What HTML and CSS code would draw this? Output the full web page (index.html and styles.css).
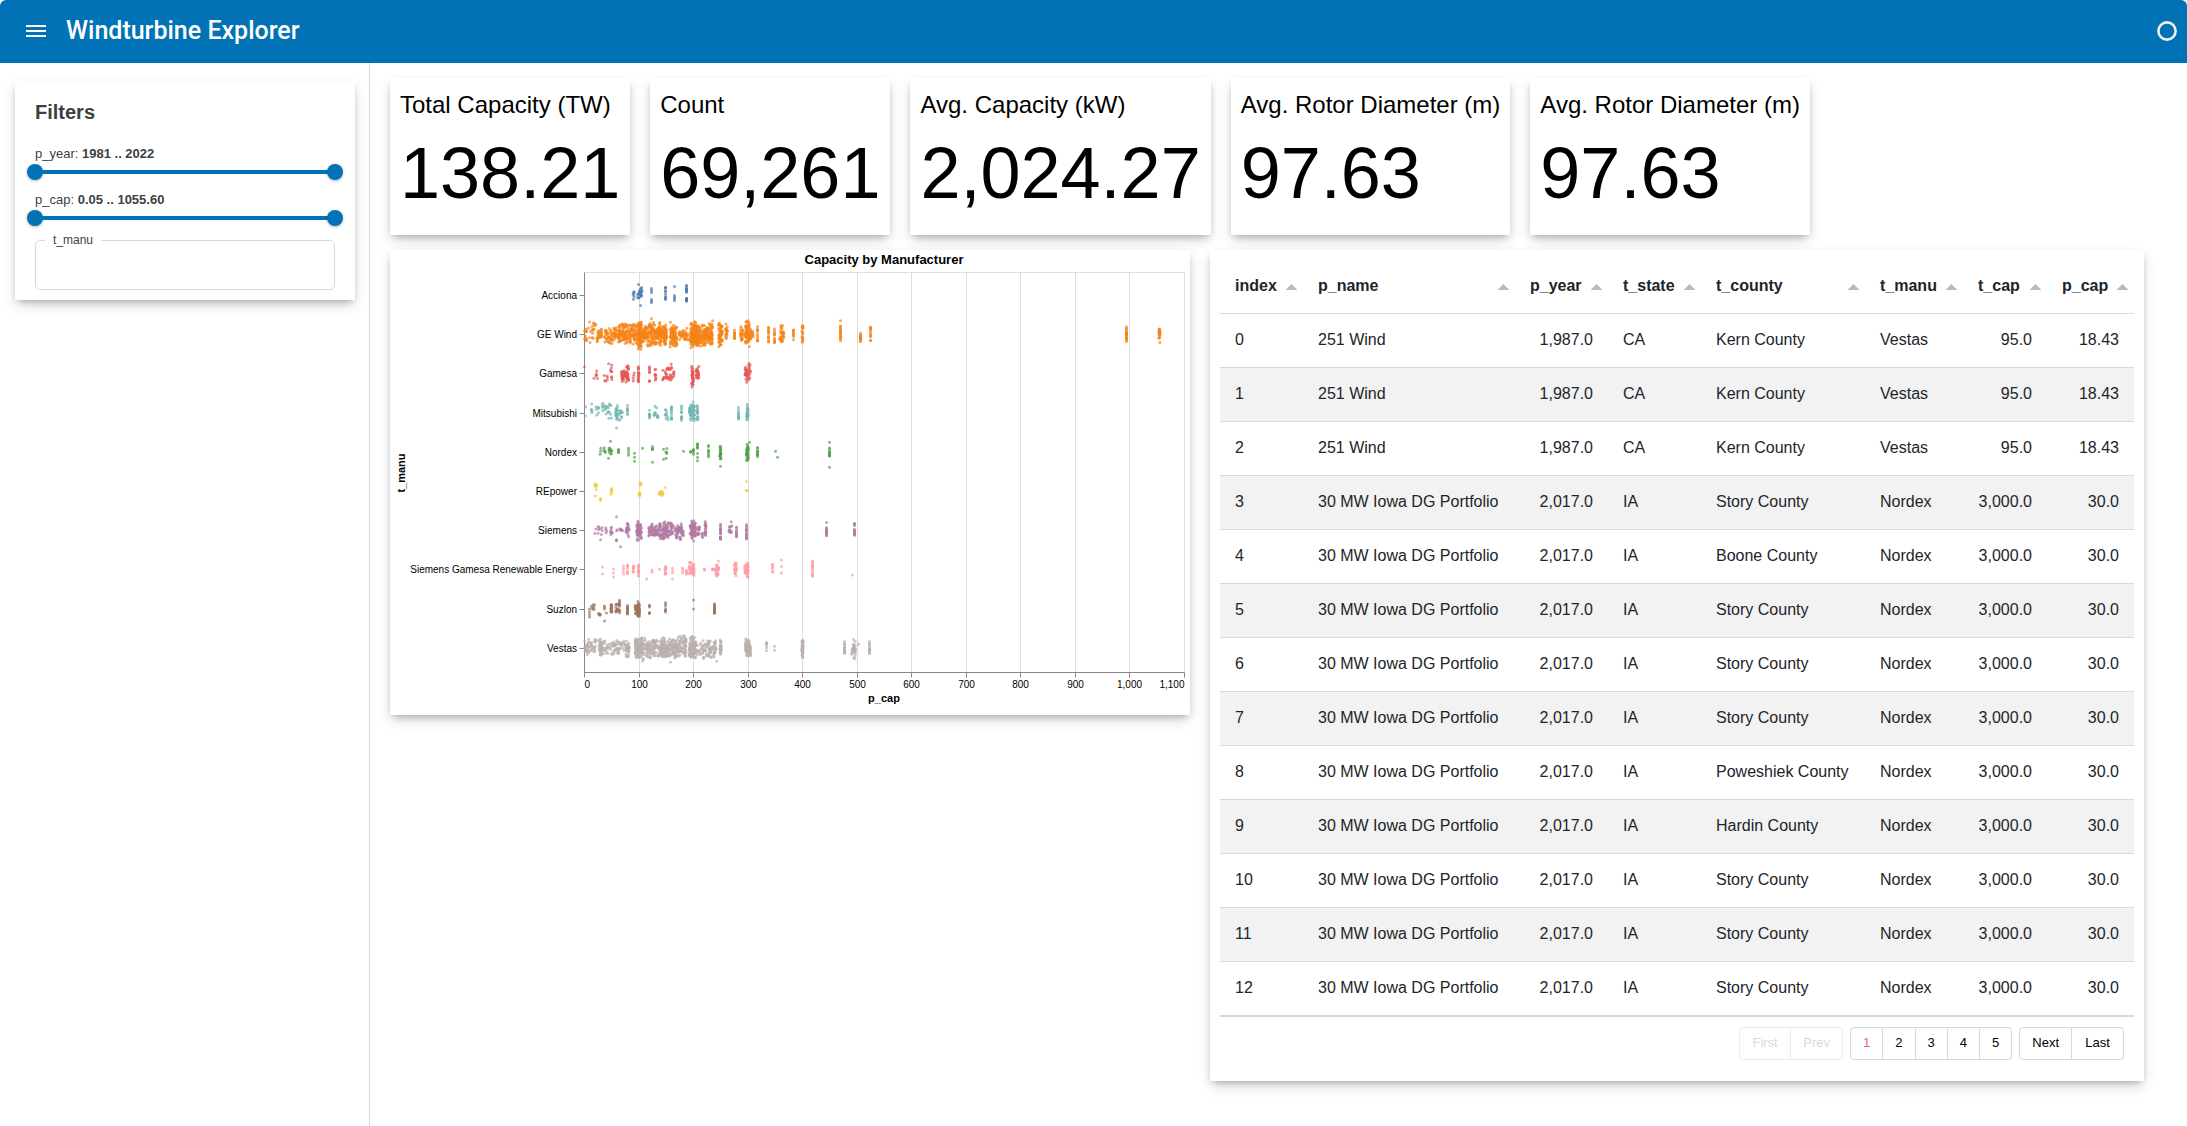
FILE: index.html
```html
<!DOCTYPE html>
<html lang="en">
<head>
<meta charset="utf-8">
<title>Windturbine Explorer</title>
<link rel="stylesheet" href="styles.css">
</head>
<body>
<header class="topbar">
  <button class="menu-button" type="button" aria-label="Toggle sidebar">
    <svg width="20" height="12" viewBox="0 0 20 12"><path d="M0 0h20v2H0zM0 5h20v2H0zM0 10h20v2H0z" fill="currentColor"/></svg>
  </button>
  <h1 class="app-title">Windturbine Explorer</h1>
  <svg class="busy" width="20" height="20" viewBox="0 0 20 20" role="img" aria-label="Idle"><circle cx="10" cy="10" r="8.6" fill="none" stroke="currentColor" stroke-width="2.6"/></svg>
</header>
<div class="layout">
  <aside class="sidebar">
    <form class="card filters">
      <h2 class="filters-title">Filters</h2>
      <div class="slider">
        <div class="slider-label" id="year-label">p_year: <b>1981 .. 2022</b></div>
        <div class="range" role="group" aria-labelledby="year-label">
          <input type="range" min="1981" max="2022" value="1981" aria-label="p_year from">
          <input type="range" min="1981" max="2022" value="2022" aria-label="p_year to">
        </div>
      </div>
      <div class="slider">
        <div class="slider-label" id="cap-label">p_cap: <b>0.05 .. 1055.60</b></div>
        <div class="range" role="group" aria-labelledby="cap-label">
          <input type="range" min="0" max="1055" value="0" aria-label="p_cap from">
          <input type="range" min="0" max="1055" value="1055" aria-label="p_cap to">
        </div>
      </div>
      <fieldset class="outlined">
        <legend><label for="manu">t_manu</label></legend>
        <input id="manu" type="text">
      </fieldset>
    </form>
  </aside>
  <main class="content">
    <div class="indicators">
      <section class="card indicator"><h2>Total Capacity (TW)</h2><p>138.21</p></section>
      <section class="card indicator"><h2>Count</h2><p>69,261</p></section>
      <section class="card indicator"><h2>Avg. Capacity (kW)</h2><p>2,024.27</p></section>
      <section class="card indicator"><h2>Avg. Rotor Diameter (m)</h2><p>97.63</p></section>
      <section class="card indicator"><h2>Avg. Rotor Diameter (m)</h2><p>97.63</p></section>
    </div>
    <div class="views">
      <section class="card chart-card">
        <svg class="chart" id="chart" viewBox="0 0 800 465" role="img" aria-label="Capacity by Manufacturer"></svg>
      </section>
      <section class="card table-card">
        <table class="data">
          <colgroup><col class="w-index"><col class="w-name"><col class="w-year"><col class="w-state"><col class="w-county"><col class="w-manu"><col class="w-tcap"><col class="w-pcap"></colgroup>
          <thead><tr><th>index</th><th>p_name</th><th>p_year</th><th>t_state</th><th>t_county</th><th>t_manu</th><th>t_cap</th><th>p_cap</th></tr></thead>
          <tbody>
            <tr><td>0</td><td>251 Wind</td><td class="num">1,987.0</td><td>CA</td><td>Kern County</td><td>Vestas</td><td class="num">95.0</td><td class="num">18.43</td></tr>
            <tr><td>1</td><td>251 Wind</td><td class="num">1,987.0</td><td>CA</td><td>Kern County</td><td>Vestas</td><td class="num">95.0</td><td class="num">18.43</td></tr>
            <tr><td>2</td><td>251 Wind</td><td class="num">1,987.0</td><td>CA</td><td>Kern County</td><td>Vestas</td><td class="num">95.0</td><td class="num">18.43</td></tr>
            <tr><td>3</td><td>30 MW Iowa DG Portfolio</td><td class="num">2,017.0</td><td>IA</td><td>Story County</td><td>Nordex</td><td class="num">3,000.0</td><td class="num">30.0</td></tr>
            <tr><td>4</td><td>30 MW Iowa DG Portfolio</td><td class="num">2,017.0</td><td>IA</td><td>Boone County</td><td>Nordex</td><td class="num">3,000.0</td><td class="num">30.0</td></tr>
            <tr><td>5</td><td>30 MW Iowa DG Portfolio</td><td class="num">2,017.0</td><td>IA</td><td>Story County</td><td>Nordex</td><td class="num">3,000.0</td><td class="num">30.0</td></tr>
            <tr><td>6</td><td>30 MW Iowa DG Portfolio</td><td class="num">2,017.0</td><td>IA</td><td>Story County</td><td>Nordex</td><td class="num">3,000.0</td><td class="num">30.0</td></tr>
            <tr><td>7</td><td>30 MW Iowa DG Portfolio</td><td class="num">2,017.0</td><td>IA</td><td>Story County</td><td>Nordex</td><td class="num">3,000.0</td><td class="num">30.0</td></tr>
            <tr><td>8</td><td>30 MW Iowa DG Portfolio</td><td class="num">2,017.0</td><td>IA</td><td>Poweshiek County</td><td>Nordex</td><td class="num">3,000.0</td><td class="num">30.0</td></tr>
            <tr><td>9</td><td>30 MW Iowa DG Portfolio</td><td class="num">2,017.0</td><td>IA</td><td>Hardin County</td><td>Nordex</td><td class="num">3,000.0</td><td class="num">30.0</td></tr>
            <tr><td>10</td><td>30 MW Iowa DG Portfolio</td><td class="num">2,017.0</td><td>IA</td><td>Story County</td><td>Nordex</td><td class="num">3,000.0</td><td class="num">30.0</td></tr>
            <tr><td>11</td><td>30 MW Iowa DG Portfolio</td><td class="num">2,017.0</td><td>IA</td><td>Story County</td><td>Nordex</td><td class="num">3,000.0</td><td class="num">30.0</td></tr>
            <tr><td>12</td><td>30 MW Iowa DG Portfolio</td><td class="num">2,017.0</td><td>IA</td><td>Story County</td><td>Nordex</td><td class="num">3,000.0</td><td class="num">30.0</td></tr>
          </tbody>
        </table>
        <nav class="pager" aria-label="Table pages">
          <div class="button-group steps"><button type="button" disabled>First</button><button type="button" disabled>Prev</button></div>
          <div class="button-group"><button type="button" class="current" aria-current="page">1</button><button type="button">2</button><button type="button">3</button><button type="button">4</button><button type="button">5</button></div>
          <div class="button-group steps"><button type="button">Next</button><button type="button">Last</button></div>
        </nav>
      </section>
    </div>
  </main>
</div>
<script src="chart.js"></script>
</body>
</html>
```
FILE: styles.css
```css
* { box-sizing: border-box; }
body {
  margin: 0;
  background: #fff;
  color: #212529;
  font-family: "Liberation Sans", Arial, sans-serif;
  min-height: 100vh;
  display: flex;
  flex-direction: column;
}
h1, h2, p { margin: 0; font-weight: 400; }
.topbar {
  height: 63px;
  padding: 0 10px 1px 26px;
  background: #0072b5;
  color: #fff;
  border-radius: 6px 6px 0 0;
  display: flex;
  align-items: center;
}
.menu-button {
  border: 0;
  padding: 0;
  background: none;
  color: inherit;
  display: flex;
  margin-right: 20px;
}
.app-title { font: 500 25px/32px Roboto, sans-serif; }
.busy { margin-left: auto; color: #f0f0f0; }
.layout { flex: 1; display: flex; }
.sidebar {
  flex: 0 0 370px;
  padding: 18px 14px 18px 15px;
  border-right: 1px solid #d9d9d9;
}
.content { flex: 1; min-width: 0; padding: 15px 43px 15px 20px; }
.card {
  background: #fff;
  box-shadow: rgba(50, 50, 93, .25) 0 6px 12px -2px, rgba(0, 0, 0, .3) 0 3px 7px -3px;
}

.filters { padding: 19px 20px 10px; color: #3b3f44; }
.filters-title { font-size: 20px; line-height: 24px; font-weight: 700; }
.slider { margin-top: 22px; }
.slider + .slider { margin-top: 12px; }
.slider-label { font-size: 13px; line-height: 16px; }
.range { display: grid; margin: 2px -8px 0; }
.range input {
  grid-area: 1 / 1;
  appearance: none;
  width: 100%;
  height: 16px;
  margin: 0;
  background: linear-gradient(#0072b5, #0072b5) center / calc(100% - 16px) 4px no-repeat;
  pointer-events: none;
}
.range input::-webkit-slider-thumb {
  appearance: none;
  width: 16px;
  height: 16px;
  border-radius: 50%;
  background: #0072b5;
  box-shadow: 0 1px 3px rgba(0, 0, 0, .3);
  pointer-events: auto;
}
.outlined {
  margin: 8px 0 0;
  padding: 0 9px;
  border: 1px solid #d9d9d9;
  border-radius: 5px;
}
.outlined legend { padding: 0 8px; font-size: 12px; line-height: 12px; }
.outlined input {
  display: block;
  width: 100%;
  height: 43px;
  border: 0;
  padding: 0;
  background: none;
  font: inherit;
}

.indicators { display: flex; flex-wrap: wrap; gap: 20px; }
.indicator { padding: 10px; color: #000; }
.indicator h2 { font-size: 24px; line-height: 34px; }
.indicator p { font-size: 72px; line-height: 103px; }

.views {
  margin-top: 15px;
  display: grid;
  grid-template-columns: 800fr 934fr;
  gap: 20px;
  align-items: start;
}
.chart { display: block; width: 100%; }
.chart text { font-size: 10px; fill: #000; }
.chart .chart-title { font-size: 13px; font-weight: 700; }
.chart .axis-title { font-size: 11px; font-weight: 700; }

.table-card { padding: 10px 10px 21px; }
.data {
  width: 100%;
  table-layout: fixed;
  border-collapse: separate;
  border-spacing: 0;
  border-bottom: 1px solid #d9d9d9;
  font-size: 16px;
  line-height: 24px;
}
.w-index { width: 83px; }
.w-name { width: 212px; }
.w-year, .w-state { width: 93px; }
.w-county { width: 164px; }
.w-manu { width: 98px; }
.w-tcap { width: 84px; }
.w-pcap { width: 87px; }
.data th, .data td {
  height: 54px;
  padding: 0 15px 2px;
  border-bottom: 1px solid #d9d9d9;
  text-align: left;
  white-space: nowrap;
}
.data th {
  padding-right: 5px;
  background: conic-gradient(from 135deg at 50% 0, #bbb 90deg, transparent 0) right 5px top 24px / 12px 6px no-repeat;
}
.data .num { text-align: right; }
.data tbody tr:nth-child(even) { background: #f2f2f2; }
.pager {
  display: flex;
  justify-content: flex-end;
  gap: 7px;
  padding: 10px 10px 0 0;
}
.button-group { display: flex; }
.button-group button {
  height: 33px;
  padding: 0 12px 1px;
  border: 1px solid #d9d9d9;
  border-left-width: 0;
  background: #fff;
  color: #000;
  font: 13px/16px "Liberation Sans", Arial, sans-serif;
}
.steps button { min-width: 52px; }
.button-group button:first-child { border-left-width: 1px; border-radius: 4px 0 0 4px; }
.button-group button:last-child { border-radius: 0 4px 4px 0; }
.button-group button:disabled { color: #d9d9d9; border-color: #ececec; }
.button-group .current { color: #f0686c; }
```
FILE: chart.js
```js
// Strip plot. Each cluster is [x, width, count, top, bottom] in chart units,
// x from the left axis and top/bottom from the row's centre line.
const LEFT = 194.5, TOP = 22.5, RIGHT = 794.5, BOTTOM = 422.5;
const rows = [
  ["Acciona", "#4c78a8", [[49,1,6,-4,4],[55,5,16,-5,4],[54,0,1,-11,-11],[56,0,1,10,10],[56,3,4,-8,-5],[67,0,3,-7,-3],[67,0,3,4,7],[81,0,10,-11,8],[90,0,1,-9,-9],[90,0,4,0,5],[102,0,16,-11,9]]],
  ["GE Wind", "#f58518", [[1,2,12,-6,6],[8,8,18,-13,8],[15,5,28,-7,8],[28,16,75,-8,9],[45,22,170,-11,10],[55,4,70,-12,15],[68,26,250,-12,11],[67,0,1,-16,-16],[81,2,45,-11,11],[89,7,90,-12,12],[99,10,45,-6,6],[110,8,170,-12,12],[120,16,170,-12,11],[128,2,1,-14,-14],[136,4,55,-11,11],[142,2,16,-11,5],[150,0,12,-6,5],[157,3,22,-10,8],[163,4,80,-15,11],[167,3,22,-6,6],[173,0,12,-9,7],[184,0,14,-8,8],[190,0,12,-7,8],[197,3,24,-10,8],[199,1,9,-4,5],[209,0,9,-6,6],[218,1,20,-10,8],[256,0,18,-10,6],[256,0,1,-14,-14],[276,0,17,-7,8],[286,0,13,-8,6],[542,0,22,-9,9],[575,1,22,-10,8]]],
  ["Gamesa", "#e45756", [[0,0,1,-7,-7],[12,5,6,-4,6],[21,4,6,-2,8],[26,4,9,-11,6],[39,4,28,-5,7],[43,4,32,-9,9],[49,2,4,-1,7],[54,1,16,-8,8],[65,0,9,-8,8],[71,1,9,-5,6],[80,4,10,-4,7],[85,6,24,-11,6],[89,1,5,-3,5],[108,2,30,-8,12],[113,3,24,-7,6],[162,3,26,-7,9],[165,2,14,-11,6]]],
  ["Mitsubishi", "#72b7b2", [[1,1,2,-6,3],[7,1,5,-12,1],[13,3,7,-8,3],[20,5,11,-10,3],[25,4,10,-9,6],[32,2,20,-8,7],[36,4,13,-3,7],[32,0,1,15,15],[43,0,8,-8,4],[65,0,10,-3,6],[71,3,8,-7,3],[73,1,5,-9,6],[82,3,10,-5,8],[87,0,14,-8,8],[97,0,13,-8,8],[106,2,32,-9,8],[109,2,28,-13,8],[113,1,16,-8,7],[154,0,12,-7,7],[163,2,24,-9,9]]],
  ["Nordex", "#54a24b", [[16,1,3,-4,2],[20,2,5,-8,1],[26,3,12,-5,2],[26,0,1,-11,-11],[24,0,1,6,6],[34,0,5,-4,1],[44,0,4,-4,3],[50,0,3,1,9],[58,0,1,-4,-4],[68,0,5,-7,0],[68,0,1,10,10],[79,0,2,-3,7],[82,1,5,-4,6],[99,0,1,-1,-1],[106,1,3,-1,0],[109,0,5,-3,7],[113,0,9,-10,9],[124,0,8,-9,5],[136,1,20,-6,7],[136,0,1,14,14],[163,2,40,-7,9],[165,0,1,-10,-10],[173,0,12,-5,6],[191,0,1,-1,-1],[193,0,1,5,5],[245,0,12,-5,4],[245,0,1,-10,-10],[245,0,1,15,15]]],
  ["REpower", "#eeca3b", [[11,2,5,-9,5],[12,2,2,-7,-6],[16,0,3,7,9],[27,1,6,-3,4],[55,1,6,-1,4],[56,2,4,-9,-6],[76,3,8,-3,3],[78,2,4,1,4],[81,0,1,-4,-4],[162,0,1,-10,-10],[162,0,2,-1,-1]]],
  ["Siemens", "#b279a2", [[14,8,10,-6,4],[16,0,1,9,9],[22,4,4,-3,2],[27,2,9,-4,4],[32,0,1,-14,-14],[32,0,3,9,10],[36,0,1,16,16],[33,2,2,-1,0],[37,3,6,-2,0],[43,3,22,-7,6],[54,4,55,-9,10],[56,2,12,-7,8],[68,8,48,-7,7],[75,5,26,-8,10],[81,7,60,-9,8],[87,4,20,-9,4],[94,6,40,-8,9],[98,2,10,-4,7],[106,2,12,-6,5],[109,4,70,-10,10],[114,2,16,-4,4],[118,1,5,0,8],[121,1,18,-10,5],[136,0,18,-7,9],[146,3,10,-4,2],[147,1,2,-9,-5],[152,0,12,-4,7],[162,0,16,-7,10],[242,0,14,-9,6],[270,0,14,-8,5]]],
  ["Siemens Gamesa Renewable Energy", "#ff9da6", [[18,0,2,-3,4],[29,0,3,-1,7],[39,0,4,-4,4],[43,0,8,-6,6],[49,1,9,-6,3],[54,0,13,-5,6],[62,0,1,9,9],[67,2,2,0,2],[75,0,1,-1,-1],[81,1,14,-7,5],[88,0,3,-2,3],[88,0,1,9,9],[98,1,4,-2,3],[102,0,5,0,6],[106,3,20,-8,5],[109,1,24,-6,6],[120,0,3,-1,0],[129,2,7,-1,0],[133,3,28,-5,6],[134,0,1,-9,-9],[151,2,24,-8,6],[161,2,14,-6,4],[163,1,24,-9,7],[188,0,7,-6,3],[197,0,3,-10,3],[228,0,15,-9,7],[268,0,1,5,5]]],
  ["Suzlon", "#9d755d", [[5,0,4,0,8],[9,4,7,-5,2],[15,2,6,4,6],[20,0,3,-3,0],[20,0,1,12,12],[22,0,1,4,4],[27,1,16,-5,3],[33,4,16,-5,4],[35,0,8,-9,4],[43,0,14,-4,5],[52,3,20,-4,5],[54,2,44,-8,7],[65,0,6,-5,6],[81,0,8,-7,4],[109,0,2,-9,0],[130,0,22,-6,6]]],
  ["Vestas", "#bab0ac", [[2,4,22,-7,8],[8,8,26,-10,8],[16,3,46,-11,9],[26,17,50,-8,8],[36,8,22,-10,6],[43,4,36,-8,9],[54,7,110,-9,10],[59,4,30,-12,12],[70,16,100,-9,9],[79,6,85,-10,10],[87,10,90,-10,9],[96,12,90,-12,9],[86,0,1,14,14],[108,7,110,-10,10],[108,2,3,-12,-10],[118,12,45,-8,11],[128,9,50,-9,10],[132,0,1,13,13],[136,1,30,-9,9],[163,4,75,-9,8],[165,2,36,-6,8],[182,0,7,-6,4],[190,0,2,-2,2],[218,1,44,-9,10],[260,0,20,-7,6],[268,2,12,-5,6],[270,2,22,-9,10],[274,0,1,-4,-4],[285,0,15,-7,6]]]
];

const svg = document.getElementById("chart");
function add(name, attrs, text) {
  const el = document.createElementNS("http://www.w3.org/2000/svg", name);
  for (const key in attrs) el.setAttribute(key, attrs[key]);
  if (text) el.textContent = text;
  svg.appendChild(el);
}
let seed = 7;
function random() {
  seed = (seed * 1664525 + 1013904223) % 4294967296;
  return seed / 4294967296;
}

add("rect", { x: LEFT, y: TOP, width: RIGHT - LEFT, height: BOTTOM - TOP, fill: "none", stroke: "#ddd" });
for (let value = 0; value <= 1100; value += 100) {
  const x = Math.round(value / 1100 * 600) + LEFT;
  add("path", { d: `M${x} ${TOP}V${BOTTOM}`, stroke: "#ddd" });
  add("path", { d: `M${x} ${BOTTOM}v5`, stroke: "#888" });
  const anchor = value === 0 ? "start" : value === 1100 ? "end" : "middle";
  add("text", { x, y: 438, "text-anchor": anchor }, value.toLocaleString("en-US"));
}
rows.forEach(([label], i) => {
  const y = Math.floor(45.5 + i * 39.2) + 0.5;
  add("path", { d: `M${LEFT - 5} ${y}h5`, stroke: "#888" });
  add("text", { x: 187, y: y + 3, "text-anchor": "end" }, label);
});
add("path", { d: `M${LEFT} ${TOP}V${BOTTOM}H${RIGHT}`, fill: "none", stroke: "#888" });
add("text", { x: 494, y: 14, "text-anchor": "middle", class: "chart-title" }, "Capacity by Manufacturer");
add("text", { x: 494, y: 452, "text-anchor": "middle", class: "axis-title" }, "p_cap");
add("text", { transform: "translate(15 223) rotate(-90)", "text-anchor": "middle", class: "axis-title" }, "t_manu");

rows.forEach(([, color, clusters], i) => {
  const centre = 45.5 + i * 39.2;
  for (const [x, width, count, top, bottom] of clusters) {
    for (let k = 0; k < count; k++) {
      let t = count === 1 ? 0.5 : count < 5 ? k / (count - 1) : random();
      if (count > 20) t = 0.5 + (random() + random() - 1) * 0.58;
      const cx = LEFT + Math.max(0, x + (random() - 0.5) * width);
      add("circle", { cx: cx.toFixed(1), cy: (centre + top + t * (bottom - top)).toFixed(1), r: 1.5, fill: color, opacity: 0.7 });
    }
  }
});
```
